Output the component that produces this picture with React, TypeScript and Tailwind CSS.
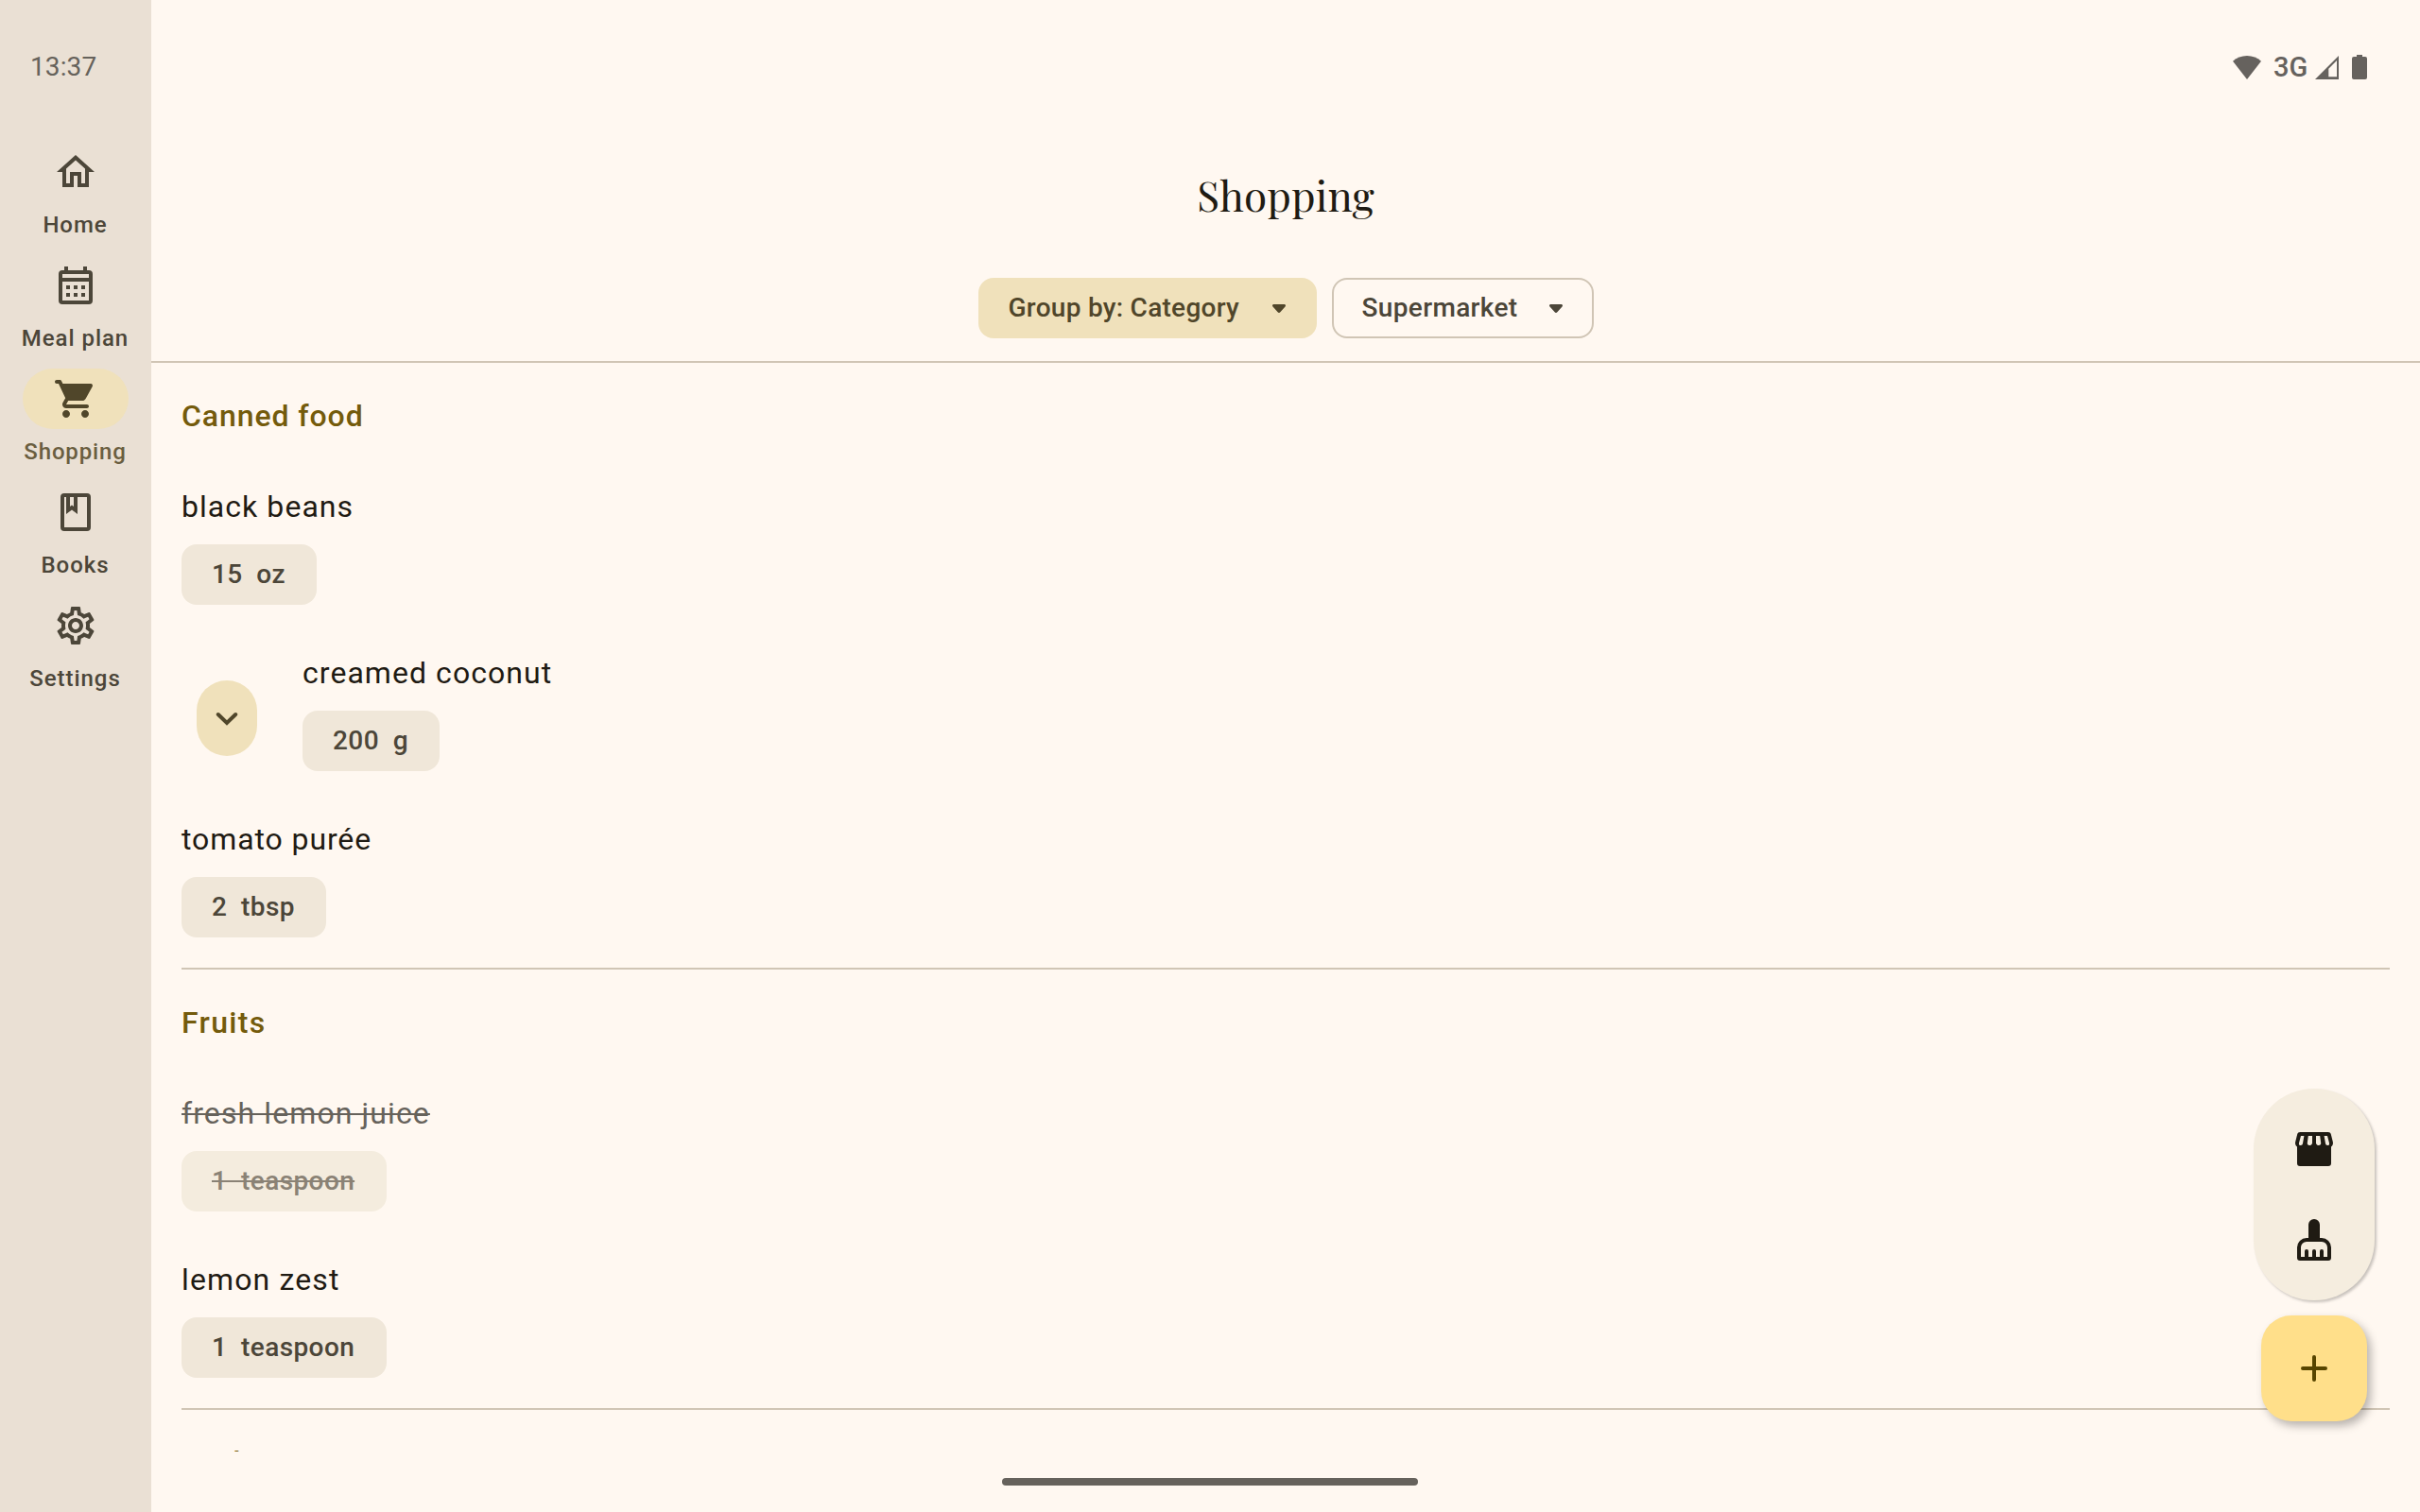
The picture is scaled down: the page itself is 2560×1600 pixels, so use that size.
import { MdOutlineHome, MdOutlineSettings } from "react-icons/md";
import type { ReactNode } from "react";

function CalendarIcon() {
  return (
    <svg viewBox="0 0 24 24" className="size-12" fill="currentColor">
      <path fillRule="evenodd" d="M6 2h2v2h8V2h2v2h1a2 2 0 0 1 2 2v14a2 2 0 0 1-2 2H5a2 2 0 0 1-2-2V6a2 2 0 0 1 2-2h1V2ZM5 6v2h14V6H5Zm0 4v10h14V10H5Zm2 2h2v2H7v-2Zm4 0h2v2h-2v-2Zm4 0h2v2h-2v-2Zm-8 4h2v2H7v-2Zm4 0h2v2h-2v-2Zm4 0h2v2h-2v-2Z" />
    </svg>
  );
}

function CartIcon() {
  return (
    <svg viewBox="0 0 24 24" className="size-12" fill="currentColor">
      <path d="M7 18c-1.1 0-1.990.9-1.990 2S5.900 22 7 22s2-.9 2-2-.9-2-2-2zM1 3c0 .55.45 1 1 1h1l3.600 7.590-1.350 2.440C4.520 15.370 5.480 17 7 17h11c.55 0 1-.45 1-1s-.45-1-1-1H7l1.100-2h7.450c.75 0 1.410-.41 1.750-1.030l3.580-6.490c.37-.66-.11-1.480-.87-1.480H5.210l-.67-1.430c-.16-.35-.52-.57-.9-.57H2c-.55 0-1 .45-1 1zm16 15c-1.100 0-1.990.9-1.990 2s.89 2 1.990 2 2-.9 2-2-.9-2-2-2z" />
    </svg>
  );
}

function BookIcon() {
  return (
    <svg viewBox="0 0 24 24" className="size-12" fill="currentColor">
      <path fillRule="evenodd" d="M6 2h12a2 2 0 0 1 2 2v16a2 2 0 0 1-2 2H6a2 2 0 0 1-2-2V4a2 2 0 0 1 2-2Zm0 2v16h12V4h-5v9l-3-2.25L7 13V4H6Zm3 0v5l1-.75L11 9V4H9Z" />
    </svg>
  );
}

function StoreIcon() {
  return (
    <svg viewBox="0 0 24 24" className="size-12">
      <path fill="currentColor" fillRule="evenodd" d="M4.600 3h14.800c.75 0 1.300.45 1.500 1.150l1 4c.3 1.100-.1 2.050-.9 2.600V19.500a1.500 1.500 0 0 1-1.500 1.500h-15A1.500 1.500 0 0 1 3 19.500v-8.750c-.8-.55-1.200-1.500-.9-2.600l1-4C3.300 3.450 3.850 3 4.600 3ZM5 5 4 8.700C3.800 9.500 4.200 10 4.900 10c.6 0 1-.4 1.100-1l.7-4H5Zm3.900 0-.5 3.800c-.1.700.4 1.200 1.100 1.200.8 0 1.500-.6 1.500-1.300V5H8.900ZM13 5v3.700c0 .7.700 1.300 1.500 1.300.7 0 1.200-.5 1.100-1.200L15.100 5H13Zm4.300 0 .7 4c.1.600.5 1 1.100 1 .7 0 1.100-.5.900-1.300L19 5h-1.700Z" />
    </svg>
  );
}

function BrushIcon() {
  return (
    <svg viewBox="0 0 24 24" className="size-12">
      <path fill="currentColor" fillRule="evenodd" d="M9 11V4a3 3 0 0 1 6 0v7h1a5 5 0 0 1 5 5v5.500a1.500 1.500 0 0 1-1.500 1.500h-15A1.500 1.500 0 0 1 3 21.500V16a5 5 0 0 1 5-5h1Zm-1 2a3 3 0 0 0-3 3v5h2v-3a1 1 0 0 1 2 0v3h2v-3a1 1 0 0 1 2 0v3h2v-3a1 1 0 0 1 2 0v3h2v-5a3 3 0 0 0-3-3H8Z" />
    </svg>
  );
}

function StatusIcons() {
  return (
    <div className="flex items-center text-[#66625e]">
      <svg viewBox="0 0 30 25" className="h-[25px] w-[30px]" fill="currentColor">
        <path d="M15 0C9.200 0 4 2.200 0 5.800L15 25 30 5.800C26 2.200 20.800 0 15 0Z" />
      </svg>
      <span className="ml-[13px] w-[44px] text-[29px] leading-8 font-medium">3G</span>
      <svg viewBox="0 0 25 25" className="h-[25px] w-[25px]" fill="currentColor">
        <path fillRule="evenodd" d="M25 0v25H0L25 0Zm-2 5-8.700 8.700V22.300H23V5Z" />
      </svg>
      <svg viewBox="0 0 16 26" className="ml-[14px] h-[26px] w-4" fill="currentColor">
        <path d="M5 0h6v2h3a2 2 0 0 1 2 2v20a2 2 0 0 1-2 2H2a2 2 0 0 1-2-2V4a2 2 0 0 1 2-2h3V0Z" />
      </svg>
    </div>
  );
}

function NavItem({ icon, label, active = false }: { icon: ReactNode; label: string; active?: boolean }) {
  return (
    <div className="flex h-[120px] flex-col items-center">
      <div className={active ? "flex h-16 w-28 items-center justify-center rounded-full bg-[#f0e1bb] text-[#50462a]" : "flex h-16 w-28 items-center justify-center text-[#4c4639]"}>
        {icon}
      </div>
      <span className={active ? "mt-2 pr-px text-2xl leading-8 font-medium tracking-[0.85px] whitespace-nowrap text-[#6a5e40]" : "mt-2 pr-px text-2xl leading-8 font-medium tracking-[0.95px] whitespace-nowrap text-[#4c4639]"}>
        {label}
      </span>
    </div>
  );
}

function DropdownArrow() {
  return (
    <svg viewBox="0 0 14 9" className="mt-px h-[9px] w-[14px]" fill="currentColor">
      <path d="M1.500 0h11c1.400 0 2 1.600 1 2.600L8.600 8.100a2.200 2.200 0 0 1-3.200 0L.5 2.600C-.5 1.600.1 0 1.500 0Z" />
    </svg>
  );
}

type ItemProps = { name: string; amount: string; unit: string; done?: boolean; tracking?: string };

function Item({ name, amount, unit, done = false, tracking = "tracking-[1.05px]" }: ItemProps) {
  return (
    <div className="flex h-44 flex-col items-start pt-12">
      <div className={`${tracking} text-[32px] leading-[48px] ${done ? "text-[#66625b] line-through decoration-2" : "text-[#1f1b13]"}`}>
        {name}
      </div>
      <div className={done ? "mt-4 flex h-16 items-center rounded-2xl bg-[#f4ecde] pr-[33.5px] pl-8 text-[#8a8275]" : "mt-4 flex h-16 items-center rounded-2xl bg-[#f0e7d9] pr-[33.5px] pl-8 text-[#4c4639]"}>
        <span className={done ? "text-[28px] leading-10 font-medium tracking-[0.4px] whitespace-pre line-through decoration-2" : "text-[28px] leading-10 font-medium tracking-[0.4px] whitespace-pre"}>
          {amount + "  " + unit}
        </span>
      </div>
    </div>
  );
}

function GroupTitle({ children, tracking = "tracking-[0.92px]" }: { children: ReactNode; tracking?: string }) {
  return <h2 className={`${tracking} h-12 text-[32px] leading-[48px] font-medium text-[#745b0c]`}>{children}</h2>;
}

export default function App() {
  return (
    <div className="relative flex h-[1600px] w-[2560px] overflow-hidden bg-[#fff8f1] font-['Roboto',sans-serif]">
      <nav className="flex w-40 shrink-0 flex-col bg-[#eae0d4]">
        <div className="h-[150px] pt-[51px] pl-8 text-[28px] leading-10 tracking-[0.1px] text-[#66625b]">13:37</div>
        <NavItem icon={<MdOutlineHome className="size-12" />} label="Home" />
        <NavItem icon={<CalendarIcon />} label="Meal plan" />
        <NavItem icon={<CartIcon />} label="Shopping" active />
        <NavItem icon={<BookIcon />} label="Books" />
        <NavItem icon={<MdOutlineSettings className="size-12" />} label="Settings" />
      </nav>

      <div className="flex min-w-0 flex-1 flex-col">
        <header className="flex h-[384px] shrink-0 flex-col items-center border-b-2 border-[#d0c5b5]">
          <div className="flex h-[150px] w-full items-start justify-end pt-[55px] pr-14">
            <StatusIcons />
          </div>
          <h1 className="mt-5 h-[76px] font-['Playfair_Display','Liberation_Serif',serif] text-[44px] leading-[72px] tracking-[0.1px] text-[#1f1b13]">
            Shopping
          </h1>
          <div className="mt-12 flex gap-4">
            <button className="flex h-16 w-[358px] items-center justify-between rounded-2xl bg-[#f0e1bb] pr-[33px] pl-8 text-[28px] font-medium tracking-[0.27px] text-[#50462a]">
              Group by: Category
              <DropdownArrow />
            </button>
            <button className="flex h-16 w-[277px] items-center justify-between rounded-2xl border-2 border-[#d0c5b5] pr-[31px] pl-[30px] text-[28px] font-medium tracking-[0.35px] text-[#4c4639]">
              Supermarket
              <DropdownArrow />
            </button>
          </div>
        </header>

        <main className="h-[1152px] shrink-0 overflow-hidden px-8">
          <section className="h-[642px] border-b-2 border-[#d0c5b5] pt-8">
            <GroupTitle>Canned food</GroupTitle>
            <Item name="black beans" amount="15" unit="oz" />
            <div className="flex">
              <div className="flex w-32 pt-20 pl-4">
                <button className="flex h-20 w-16 items-center justify-center rounded-full bg-[#f0e1bb] text-[#50462a]">
                  <svg viewBox="0 0 24 24" className="size-12" fill="none" stroke="currentColor" strokeWidth="2" strokeLinecap="round">
                    <path d="m7.400 10 4.600 4.500 4.600-4.500" />
                  </svg>
                </button>
              </div>
              <Item name="creamed coconut" amount="200" unit="g" />
            </div>
            <Item name="tomato purée" amount="2" unit="tbsp" tracking="tracking-[0.9px]" />
          </section>
          <section className="h-[466px] border-b-2 border-[#d0c5b5] pt-8">
            <GroupTitle tracking="tracking-[1.3px]">Fruits</GroupTitle>
            <Item name="fresh lemon juice" amount="1" unit="teaspoon" done tracking="tracking-[1.1px]" />
            <Item name="lemon zest" amount="1" unit="teaspoon" tracking="tracking-[1.13px]" />
          </section>
          <section className="pt-[31px]">
            <GroupTitle tracking="tracking-[1.1px]">Herbs</GroupTitle>
          </section>
        </main>
      </div>

      <div className="absolute top-[1564px] left-[1060px] h-2 w-[440px] rounded-full bg-[#66625c]" />

      <div className="absolute right-12 bottom-24 flex flex-col items-center gap-4">
        <div className="flex h-56 w-32 flex-col items-center justify-center gap-12 rounded-full bg-[#f5eddf] text-[#1f1b13] shadow-[2px_2px_3px_rgba(0,0,0,0.22)]">
          <StoreIcon />
          <BrushIcon />
        </div>
        <button className="flex size-28 items-center justify-center rounded-[32px] bg-[#ffdf8a] text-[#574500] shadow-[4px_5px_10px_rgba(0,0,0,0.28)]">
          <svg viewBox="0 0 24 24" className="size-12" fill="none" stroke="currentColor" strokeWidth="2" strokeLinecap="round">
            <path d="M12 6v12M6 12h12" />
          </svg>
        </button>
      </div>
    </div>
  );
}
